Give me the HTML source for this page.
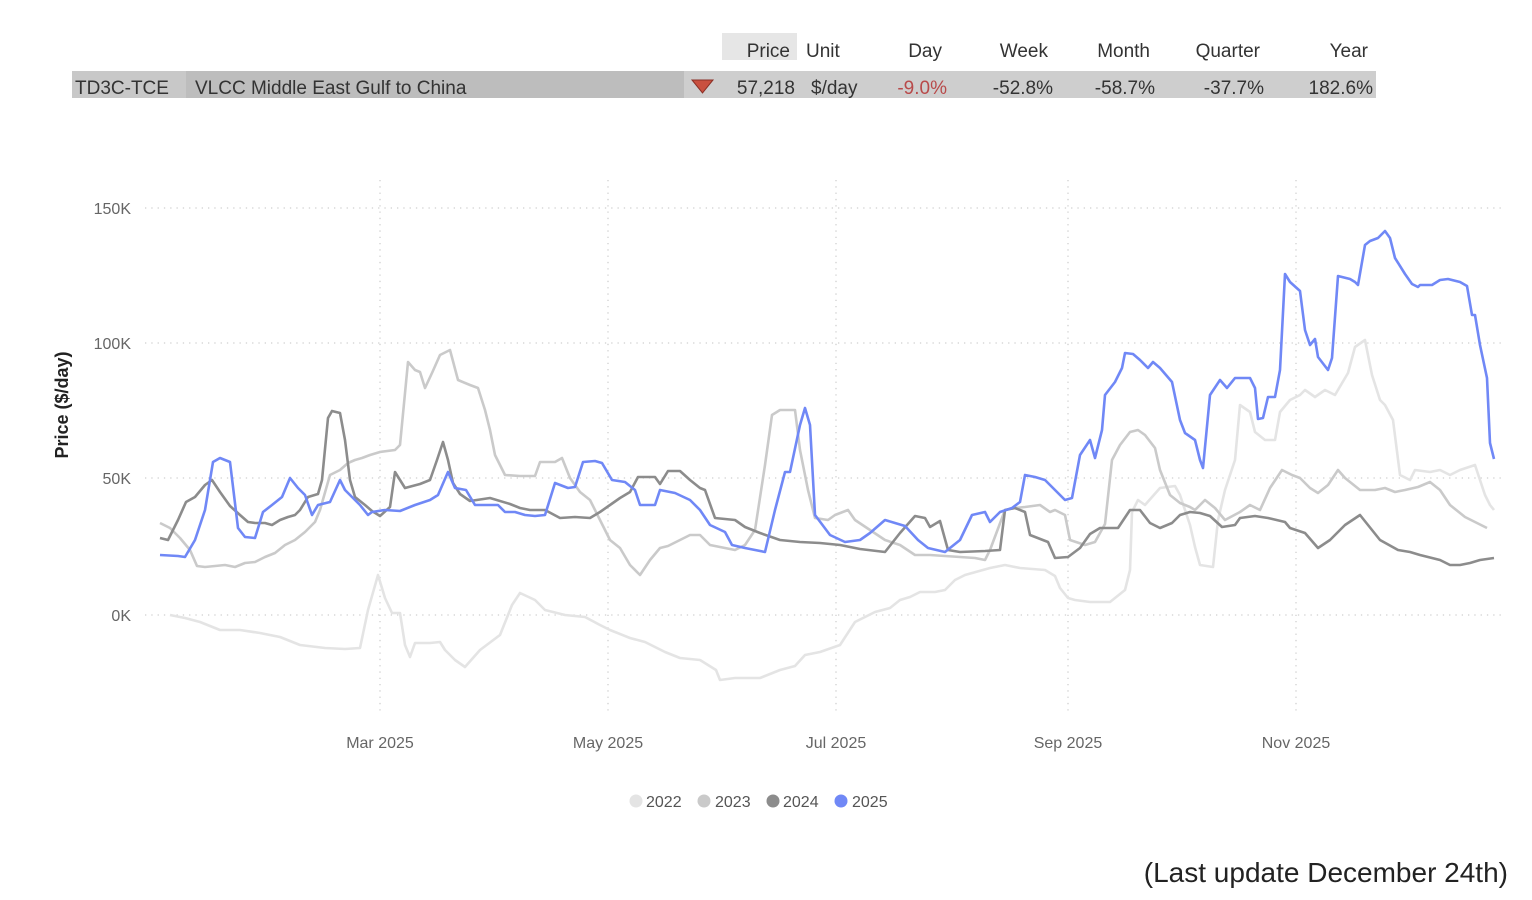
<!DOCTYPE html>
<html><head><meta charset="utf-8"><style>
html,body{margin:0;padding:0;background:#fff;width:1532px;height:900px;overflow:hidden}
svg{display:block}
text{font-family:"Liberation Sans",sans-serif}
</style></head><body>
<svg width="1532" height="900" viewBox="0 0 1532 900" xmlns="http://www.w3.org/2000/svg">
<!-- table -->
<rect x="722" y="33" width="75" height="27" fill="#e6e6e6"/>
<rect x="72" y="71" width="1304" height="27" fill="#cecece"/>
<rect x="72" y="71" width="114" height="27" fill="#c8c8c8"/>
<rect x="186" y="71" width="498" height="27" fill="#bdbdbd"/>
<g font-size="19" fill="#333">
<text x="790" y="57" text-anchor="end">Price</text>
<text x="806" y="57">Unit</text>
<text x="942" y="57" text-anchor="end">Day</text>
<text x="1048" y="57" text-anchor="end">Week</text>
<text x="1150" y="57" text-anchor="end">Month</text>
<text x="1260" y="57" text-anchor="end">Quarter</text>
<text x="1368" y="57" text-anchor="end">Year</text>
<text x="75" y="94">TD3C-TCE</text>
<text x="195" y="94">VLCC Middle East Gulf to China</text>
<text x="795" y="94" text-anchor="end">57,218</text>
<text x="811" y="94">$/day</text>
<text x="947" y="94" text-anchor="end" fill="#b84a4a">-9.0%</text>
<text x="1053" y="94" text-anchor="end">-52.8%</text>
<text x="1155" y="94" text-anchor="end">-58.7%</text>
<text x="1264" y="94" text-anchor="end">-37.7%</text>
<text x="1373" y="94" text-anchor="end">182.6%</text>
</g>
<polygon points="692,80 713,80 702.5,93" fill="#c9503f" stroke="#8a2f25" stroke-width="1"/>
<!-- grid -->
<g stroke="#cfcfcf" stroke-width="1.3" stroke-dasharray="1.3 5">
<line x1="145" y1="208" x2="1505" y2="208"/>
<line x1="145" y1="343" x2="1505" y2="343"/>
<line x1="145" y1="478" x2="1505" y2="478"/>
<line x1="145" y1="615" x2="1505" y2="615"/>
<line x1="380" y1="180" x2="380" y2="715"/>
<line x1="608" y1="180" x2="608" y2="715"/>
<line x1="836" y1="180" x2="836" y2="715"/>
<line x1="1068" y1="180" x2="1068" y2="715"/>
<line x1="1296" y1="180" x2="1296" y2="715"/>
</g>
<g font-size="16" fill="#666">
<text x="131" y="214" text-anchor="end">150K</text>
<text x="131" y="349" text-anchor="end">100K</text>
<text x="131" y="484" text-anchor="end">50K</text>
<text x="131" y="621" text-anchor="end">0K</text>
<text x="380" y="748" text-anchor="middle">Mar 2025</text>
<text x="608" y="748" text-anchor="middle">May 2025</text>
<text x="836" y="748" text-anchor="middle">Jul 2025</text>
<text x="1068" y="748" text-anchor="middle">Sep 2025</text>
<text x="1296" y="748" text-anchor="middle">Nov 2025</text>
</g>
<text transform="translate(68,405) rotate(-90)" text-anchor="middle" font-size="18" font-weight="bold" fill="#222">Price ($/day)</text>
<g fill="none" stroke-width="2.6" stroke-linejoin="round">
<polyline stroke="#e4e4e4" points="170,615 185,618 200,622 220,630 240,630 260,633 280,637 300,645 325,648 345,649 360,648 368,610 378,575 385,598 392,613 400,613 405,645 410,657 415,643 430,643 440,642 445,650 455,660 465,667 480,650 500,635 512,605 520,593 535,600 545,610 565,615 585,617 600,625 610,630 630,638 645,642 665,652 680,658 700,660 716,670 720,680 735,678 760,678 780,670 795,666 805,655 820,652 840,645 855,622 875,612 890,608 900,600 910,597 920,592 935,592 945,590 955,580 965,575 990,568 1005,565 1020,568 1045,570 1055,576 1060,588 1068,598 1075,600 1090,602 1110,602 1115,598 1125,590 1130,570 1132,512 1138,500 1145,505 1160,488 1175,486 1180,495 1190,525 1195,547 1200,565 1213,567 1218,520 1225,490 1235,460 1240,405 1250,412 1255,432 1265,440 1275,440 1280,412 1290,400 1300,395 1305,390 1315,397 1325,390 1335,395 1348,373 1355,347 1365,340 1372,375 1380,400 1385,405 1393,420 1400,475 1410,480 1415,470 1430,472 1440,470 1450,475 1460,470 1475,465 1480,480 1485,495 1490,505 1494,510"/>
<polyline stroke="#cacaca" points="160,523 170,528 180,538 190,550 197,566 205,567 215,566 225,565 235,567 245,563 255,562 265,557 275,553 285,545 295,540 305,532 315,522 320,510 330,475 340,470 348,463 355,460 362,458 370,455 380,452 395,450 400,445 408,362 415,370 420,372 425,388 432,373 440,355 450,350 458,380 470,385 478,388 485,410 490,430 495,455 505,475 520,476 535,476 540,462 555,462 562,458 570,478 580,492 590,500 600,520 610,540 620,548 630,565 640,575 650,560 660,548 668,546 680,540 690,535 700,535 710,545 725,548 735,550 745,545 755,530 765,465 772,415 780,410 795,410 800,450 808,490 815,518 828,520 835,515 848,510 855,520 870,530 885,540 900,545 915,555 930,555 945,556 960,557 975,558 985,560 990,550 1005,510 1015,508 1025,507 1040,505 1050,512 1055,510 1065,515 1070,540 1085,545 1095,542 1105,524 1112,460 1120,445 1130,432 1138,430 1145,435 1155,448 1160,470 1170,495 1180,503 1190,507 1195,510 1205,500 1215,508 1225,520 1240,512 1250,505 1260,510 1270,488 1282,470 1292,475 1300,478 1310,488 1318,493 1328,485 1338,470 1345,478 1360,490 1375,490 1385,488 1395,492 1405,490 1418,487 1430,482 1440,490 1450,505 1465,517 1475,522 1487,528"/>
<polyline stroke="#8c8c8c" points="160,538 168,540 178,520 186,502 195,497 205,485 212,480 220,492 230,506 240,515 248,522 255,523 265,523 272,525 280,520 288,517 295,515 300,510 308,497 318,494 322,480 328,418 332,411 340,413 345,440 350,480 355,497 365,505 372,511 380,516 390,507 395,472 400,480 405,488 420,484 430,480 437,460 443,442 448,460 453,483 460,494 470,501 490,498 510,504 520,508 530,510 545,510 560,518 575,517 590,518 600,512 610,505 620,498 630,492 638,477 655,477 660,484 668,471 680,471 690,480 700,488 705,490 715,518 735,520 745,527 760,533 780,540 800,542 820,543 840,545 860,549 885,552 900,533 915,516 925,518 930,527 940,521 948,550 960,552 985,551 1000,550 1005,510 1015,508 1025,512 1030,535 1048,542 1055,558 1068,557 1080,548 1090,534 1100,528 1118,528 1130,510 1140,510 1150,523 1160,528 1172,523 1180,515 1190,512 1200,513 1210,516 1222,527 1235,525 1240,518 1255,516 1268,518 1285,522 1290,528 1305,533 1318,548 1330,540 1345,525 1360,515 1368,525 1380,540 1398,550 1410,552 1420,555 1440,560 1450,565 1460,565 1470,563 1480,560 1494,558"/>
<polyline stroke="#7088f6" points="160,555 178,556 185,557 195,540 205,510 213,462 220,458 230,462 238,528 245,537 255,538 263,512 272,505 282,497 290,478 298,488 305,495 312,515 318,505 330,502 340,480 345,490 360,505 368,515 372,512 385,510 400,511 415,505 430,500 438,495 448,472 455,488 466,490 475,505 485,505 498,505 505,512 515,512 525,515 535,516 545,515 555,483 568,488 575,487 583,462 595,461 602,463 612,480 625,482 635,490 640,505 655,505 660,490 675,493 690,500 700,510 710,525 725,532 732,545 745,548 765,552 775,510 785,472 790,472 800,425 805,408 810,425 815,515 830,535 845,542 860,540 870,533 885,520 895,523 905,526 918,540 928,548 945,552 960,540 972,515 985,512 990,522 1000,512 1012,508 1020,502 1025,475 1035,477 1045,480 1050,485 1065,500 1072,498 1080,455 1090,440 1095,458 1102,430 1105,395 1115,382 1122,368 1125,353 1133,354 1140,360 1148,368 1153,362 1160,368 1172,382 1180,420 1185,433 1195,440 1200,460 1203,468 1210,395 1220,380 1227,388 1235,378 1250,378 1255,388 1258,419 1263,418 1268,397 1275,397 1280,370 1285,274 1290,282 1300,291 1305,330 1310,345 1315,339 1318,357 1328,370 1332,358 1338,276 1350,279 1355,282 1358,285 1365,245 1370,241 1378,238 1385,231 1390,238 1395,258 1405,274 1412,284 1418,287 1420,285 1432,285 1440,280 1448,279 1460,282 1467,286 1472,315 1475,315 1480,345 1487,378 1490,443 1494,459"/>
</g>
<!-- legend -->
<circle cx="636" cy="801" r="6.5" fill="#e4e4e4"/>
<circle cx="704" cy="801" r="6.5" fill="#cacaca"/>
<circle cx="773" cy="801" r="6.5" fill="#8c8c8c"/>
<circle cx="841" cy="801" r="6.5" fill="#7088f6"/>
<g font-size="16" fill="#555">
<text x="646" y="807">2022</text>
<text x="715" y="807">2023</text>
<text x="783" y="807">2024</text>
<text x="852" y="807">2025</text>
</g>
<text x="1508" y="882" text-anchor="end" font-size="28" fill="#222">(Last update December 24th)</text>
</svg>
</body></html>
